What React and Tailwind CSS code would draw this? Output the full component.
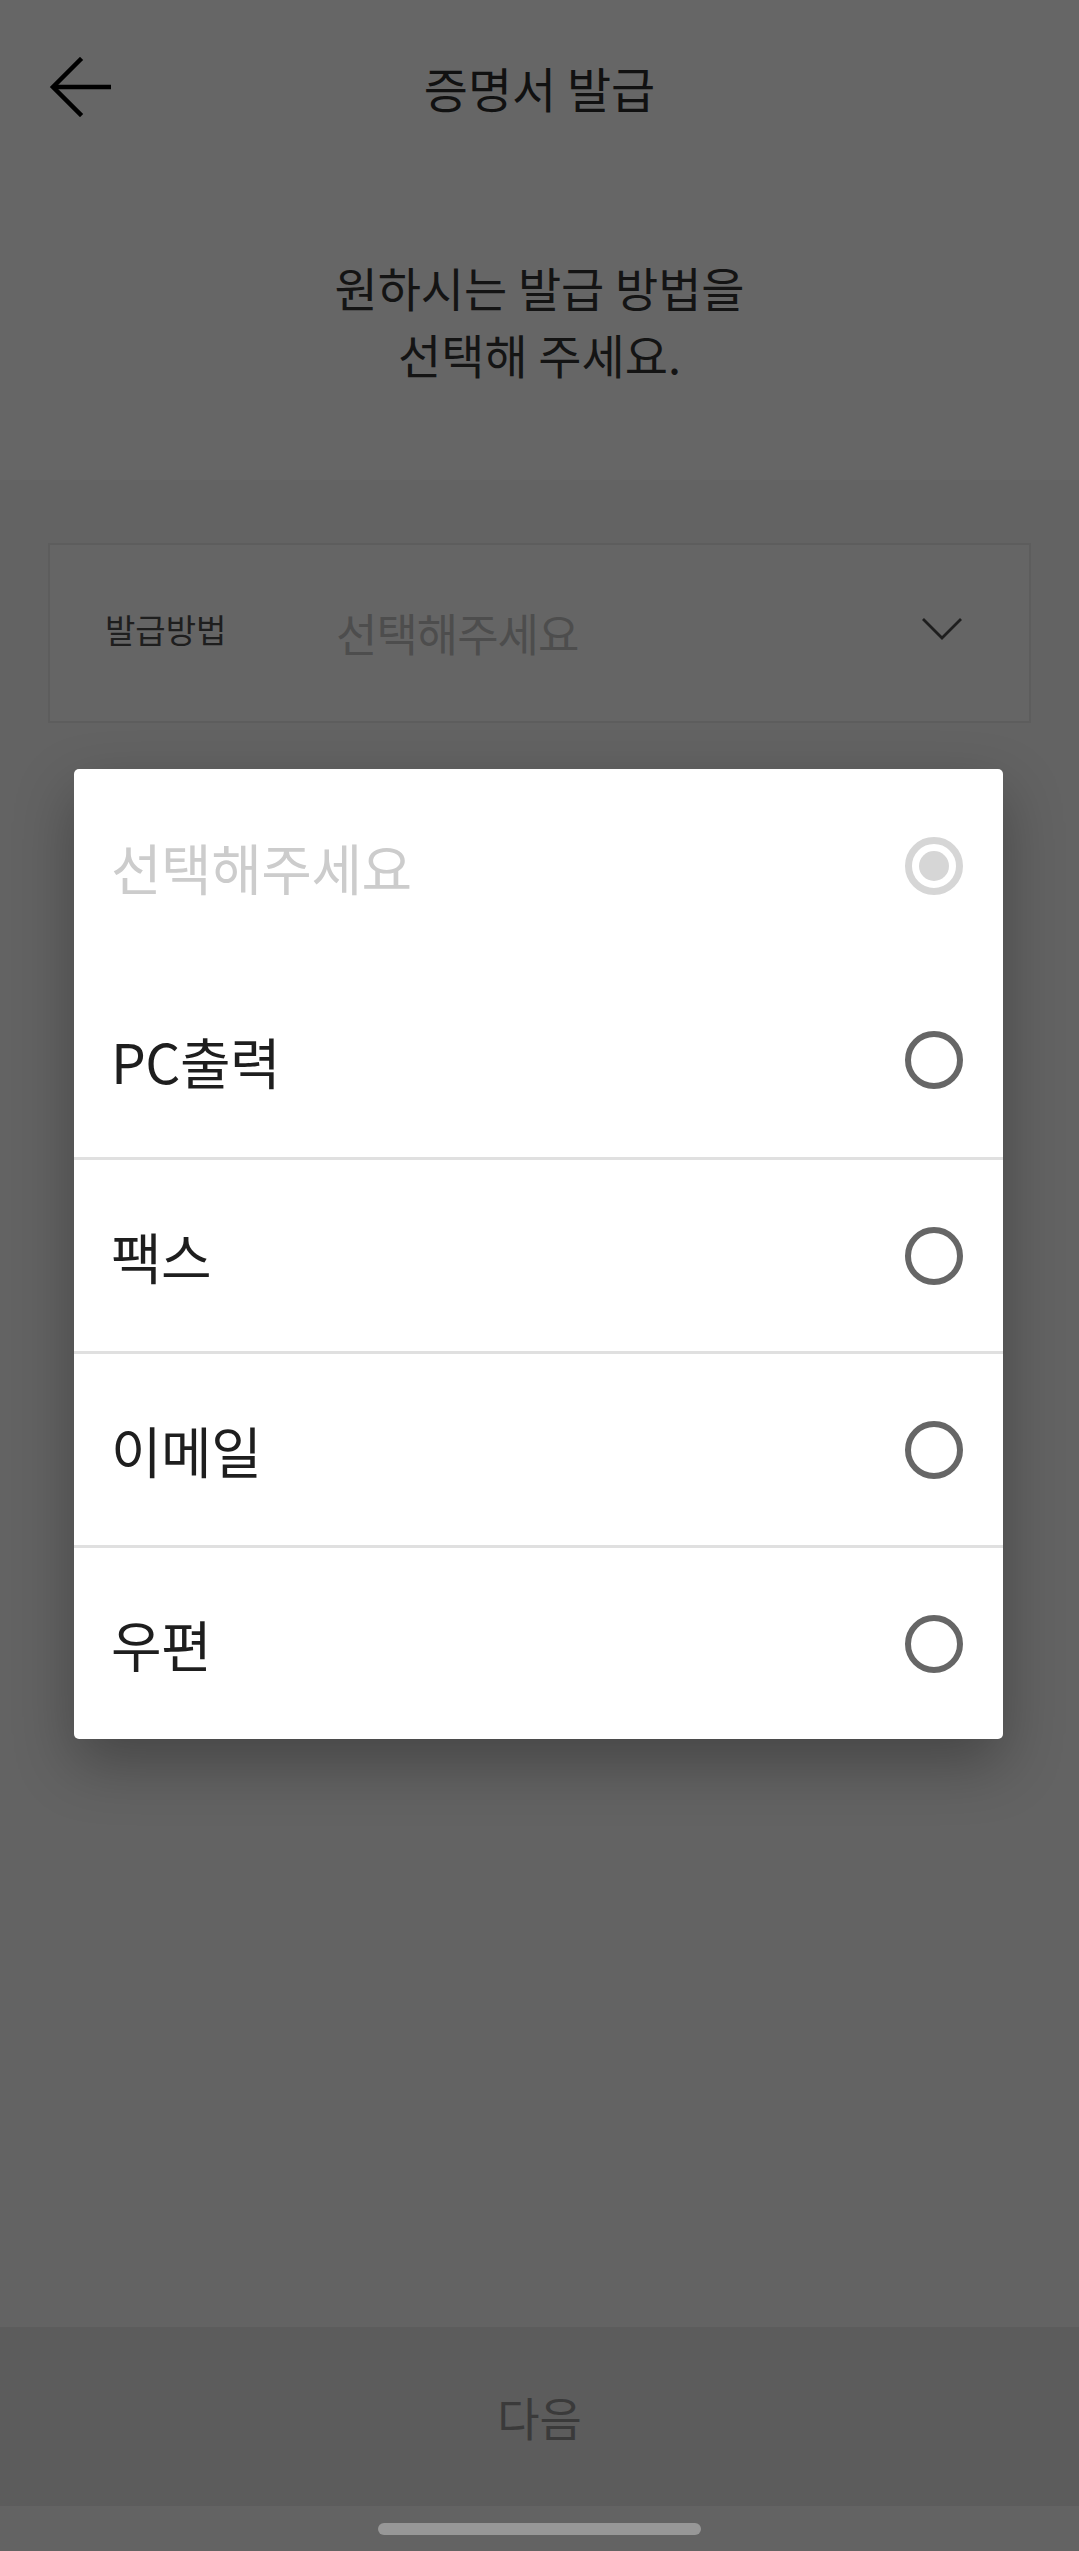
const options = [
  { label: "선택해주세요", selected: true, disabled: true },
  { label: "PC출력" },
  { label: "팩스" },
  { label: "이메일" },
  { label: "우편" },
];

const BackArrow = () => (
  <svg width="64" height="60" viewBox="0 0 64 60" fill="none">
    <path d="M32 3 L5 30 L32 57" stroke="#000" strokeWidth="4.5" strokeLinecap="square" />
    <path d="M5 30 H63" stroke="#000" strokeWidth="4.5" />
  </svg>
);

const Chevron = () => (
  <svg width="42" height="24" viewBox="0 0 42 24" fill="none">
    <path d="M2 2 L21 21 L40 2" stroke="#1e1e1e" strokeWidth="2.8" />
  </svg>
);

const Radio = ({ selected }) => {
  if (selected) {
    return (
      <div className="w-[58px] h-[58px] rounded-full border-[7px] border-[#d6d6d6] flex items-center justify-center">
        <div className="w-[30px] h-[30px] rounded-full bg-[#d6d6d6]" />
      </div>
    );
  }
  return <div className="w-[58px] h-[58px] rounded-full border-[6px] border-[#666666]" />;
};

const OptionRow = ({ option, divider }) => (
  <div className={`flex items-center justify-between h-[194px] pl-[37px] pr-[40px] ${divider ? "border-t-[3px] border-[#e0e0e0]" : ""}`}>
    <span className={`text-[55px] leading-none tracking-[-0.5px] ${option.disabled ? "text-[#cccccc]" : "text-[#1e1e1e]"}`}>
      {option.label}
    </span>
    <Radio selected={option.selected} />
  </div>
);

export default function App() {
  return (
    <div
      className="relative w-[1079px] h-[2551px] flex flex-col bg-[#636363] overflow-hidden"
      style={{ fontFamily: '"Noto Sans CJK KR", "Noto Sans", sans-serif' }}
    >
      {/* header */}
      <div className="bg-[#666666] h-[480px] flex flex-col">
        <div className="relative h-[174px] flex items-center justify-center">
          <div className="absolute left-[48px] top-[57px]">
            <BackArrow />
          </div>
          <h1 className="text-[48px] text-[#111111] font-normal">증명서 발급</h1>
        </div>
        <p className="mt-[79px] text-center text-[47px] leading-[67px] text-[#141414]">
          원하시는 발급 방법을
          <br />
          선택해 주세요.
        </p>
      </div>

      {/* select box */}
      <div className="flex-1 pt-[63px] px-[48px]">
        <div className="h-[180px] border-2 border-[#5d5d5d] bg-[#656565] flex items-center pl-[55px] pr-[66px]">
          <span className="w-[231px] text-[33px] text-[#1e1e1e] -mt-[6px]">발급방법</span>
          <span className="flex-1 text-[45px] text-[#4d4d4d] tracking-[-1px]">선택해주세요</span>
          <div className="-mt-[8px]">
            <Chevron />
          </div>
        </div>
      </div>

      {/* next button */}
      <div className="h-[179px] bg-[#5c5c5c] flex items-center justify-center">
        <span className="text-[46px] text-[#3a3a3a]">다음</span>
      </div>
      <div className="h-[45px] flex justify-center pt-[17px]">
        <div className="w-[323px] h-[12px] rounded-full bg-[#979797]" />
      </div>

      {/* option sheet */}
      <div className="absolute left-[74px] top-[769px] w-[929px] bg-white rounded-[5px] shadow-[0_24px_60px_rgba(0,0,0,0.3)]">
        {options.map((option, i) => (
          <OptionRow key={option.label} option={option} divider={i > 1} />
        ))}
      </div>
    </div>
  );
}
